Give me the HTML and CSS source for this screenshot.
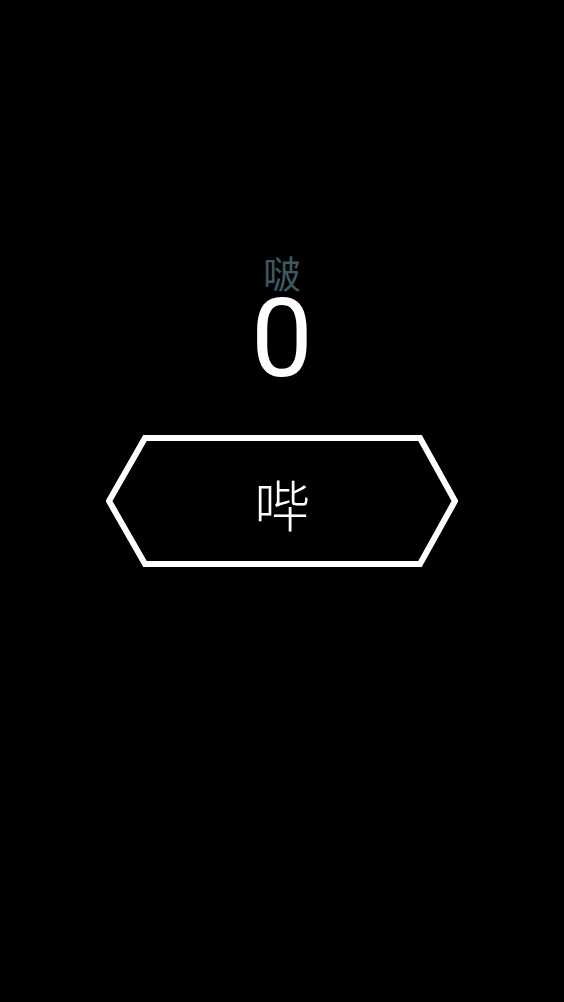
FILE: index.html
```html
<!DOCTYPE html>
<html lang="zh">
<head>
<meta charset="utf-8">
<link rel="stylesheet" href="styles.css">
</head>
<body>
<main class="screen">
  <div class="label">啵</div>
  <div class="count">0</div>
  <button class="hex-btn">
    <svg class="hex-shape" viewBox="0 0 352 132" width="352" height="132">
      <polygon points="3,66 39,3 314,3 349,66 314,129 39,129" fill="none" stroke="#ffffff" stroke-width="6" stroke-linejoin="miter"/>
    </svg>
    <span class="hex-text">哔</span>
  </button>
</main>
</body>
</html>
```
FILE: styles.css
```css
html, body {
  margin: 0;
  padding: 0;
  background: #000;
  height: 100%;
}
.screen {
  width: 564px;
  height: 1002px;
  display: flex;
  flex-direction: column;
  align-items: center;
  padding-top: 250px;
  box-sizing: border-box;
  font-family: "Noto Sans CJK SC", "Noto Sans", sans-serif;
}
.label {
  color: #3b5a60;
  font-size: 38px;
  line-height: 44px;
  height: 44px;
}
.count {
  color: #fff;
  font-family: Roboto, "Noto Sans", sans-serif;
  font-size: 110px;
  line-height: 88px;
  height: 88px;
  margin-top: 1px;
}
.hex-btn {
  position: relative;
  width: 352px;
  height: 132px;
  margin-top: 52px;
  padding: 0;
  border: 0;
  background: transparent;
  display: flex;
  align-items: center;
  justify-content: center;
}
.hex-shape {
  position: absolute;
  left: 0;
  top: 0;
}
.hex-text {
  position: relative;
  color: #fff;
  font-family: "Noto Sans CJK SC", sans-serif;
  font-weight: 300;
  font-size: 56px;
  line-height: 60px;
  top: 2px;
}
```
